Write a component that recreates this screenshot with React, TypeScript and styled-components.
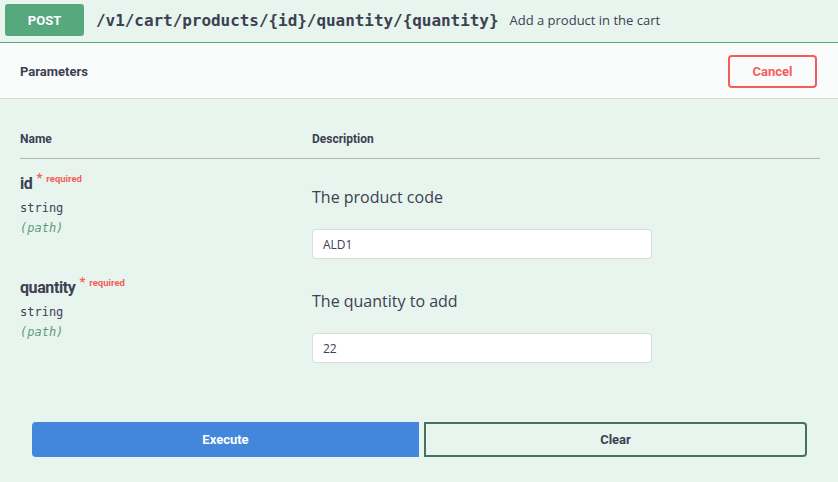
import React from "react";
import styled, { createGlobalStyle } from "styled-components";

const Global = createGlobalStyle`
  html, body { margin: 0; padding: 0; background: #e8f4ee; }
  * { box-sizing: border-box; }
`;

const TITLE = `"Roboto", "Open Sans", sans-serif`;
const MONO = `"DejaVu Sans Mono", "Liberation Mono", monospace`;
const TEXT = `"Open Sans", "Roboto", sans-serif`;

const Page = styled.div`
  width: 838px;
  height: 482px;
  background: #e8f4ee;
  color: #3b4151;
  overflow: hidden;
`;

const Summary = styled.div`
  display: flex;
  align-items: center;
  height: 43px;
  padding: 4px 5px 6px;
  border-bottom: 1px solid #55a97d;
`;

const Method = styled.span`
  display: flex;
  align-items: center;
  justify-content: center;
  width: 79px;
  height: 32px;
  border-radius: 3px;
  background: #55a97d;
  color: #fff;
  font-family: ${TITLE};
  font-weight: 700;
  font-size: 13px;
  text-shadow: 0 1px 0 rgba(0, 0, 0, 0.1);
`;

const PathText = styled.span`
  margin-left: 12px;
  font-family: ${MONO};
  font-weight: 700;
  font-size: 16px;
  letter-spacing: -0.05px;
  color: #3b4151;
`;

const SummaryDesc = styled.span`
  margin-left: 11px;
  font-family: ${TEXT};
  font-size: 13px;
  color: #3b4151;
`;

const SectionHeader = styled.div`
  display: flex;
  align-items: center;
  justify-content: space-between;
  height: 56px;
  padding: 1px 21px 0 20px;
  background: #fafcfb;
  border-bottom: 1px solid #d8ddda;
`;

const SectionTitle = styled.h4`
  margin: 0;
  padding-top: 1px;
  font-family: ${TITLE};
  font-weight: 700;
  font-size: 13px;
  color: #3b4151;
`;

const CancelButton = styled.button`
  width: 89px;
  height: 33px;
  border: 2px solid #f45c5c;
  border-radius: 4px;
  background: transparent;
  color: #f45c5c;
  font-family: ${TITLE};
  font-weight: 700;
  font-size: 13px;
`;

const Table = styled.div`
  padding: 0 18px 0 20px;
`;

const HeadRow = styled.div`
  display: grid;
  grid-template-columns: 292px 1fr;
  padding: 32px 0 11px;
  border-bottom: 1px solid #b3b6a9;
`;

const HeadCell = styled.div`
  font-family: ${TITLE};
  font-weight: 700;
  font-size: 12px;
  line-height: 16px;
  color: #3b4151;
`;

const Row = styled.div`
  display: grid;
  grid-template-columns: 292px 1fr;
  padding: 15px 0 4px;
`;

const NameCell = styled.div`
  display: flex;
  flex-direction: column;
`;

const ParamName = styled.div`
  font-family: ${TITLE};
  font-weight: 700;
  font-size: 16px;
  line-height: 20px;
  color: #3b4151;
  letter-spacing: -0.4px;
`;

const Required = styled.span`
  position: relative;
  top: -7px;
  margin-left: 4px;
  font-family: ${TITLE};
  font-weight: 700;
  font-size: 9.5px;
  letter-spacing: 0;
  color: #f45c5c;

  &::before {
    content: "*";
    font-size: 13px;
    font-weight: 700;
    margin-right: 4px;
  }
`;

const ParamType = styled.div`
  margin-top: 2px;
  font-family: ${MONO};
  font-size: 12px;
  line-height: 20px;
  color: #3b4151;
`;

const ParamIn = styled.div`
  font-family: ${MONO};
  font-style: italic;
  font-size: 12px;
  line-height: 20px;
  color: #5f9b7e;
`;

const DescCell = styled.div`
  display: flex;
  flex-direction: column;
  padding-top: 11px;
`;

const DescText = styled.div`
  font-family: ${TEXT};
  font-size: 16px;
  line-height: 24px;
  color: #3b4151;
`;

const Input = styled.input`
  margin-top: 20px;
  width: 340px;
  height: 30px;
  padding: 0 10px;
  border: 1px solid #d9dedb;
  border-radius: 4px;
  background: #fff;
  font-family: ${TEXT};
  font-size: 12px;
  color: #3b4151;
  outline: none;
`;

const Actions = styled.div`
  display: flex;
  gap: 5px;
  padding: 55px 31px 0 32px;
`;

const ExecuteButton = styled.button`
  width: 387px;
  height: 35px;
  border: none;
  border-radius: 4px 0 0 4px;
  background: #4287dc;
  color: #fff;
  font-family: ${TITLE};
  font-weight: 700;
  font-size: 13px;
`;

const ClearButton = styled.button`
  flex: 1;
  height: 35px;
  border: 2px solid #44725f;
  border-radius: 0 4px 4px 0;
  background: transparent;
  color: #3b4151;
  font-family: ${TITLE};
  font-weight: 700;
  font-size: 13px;
`;

const params = [
  { name: "id", type: "string", loc: "(path)", desc: "The product code", value: "ALD1" },
  { name: "quantity", type: "string", loc: "(path)", desc: "The quantity to add", value: "22" },
];

export default function App() {
  return (
    <Page>
      <Global />
      <Summary>
        <Method>POST</Method>
        <PathText>/v1/cart/products/&#123;id&#125;/quantity/&#123;quantity&#125;</PathText>
        <SummaryDesc>Add a product in the cart</SummaryDesc>
      </Summary>
      <SectionHeader>
        <SectionTitle>Parameters</SectionTitle>
        <CancelButton>Cancel</CancelButton>
      </SectionHeader>
      <Table>
        <HeadRow>
          <HeadCell>Name</HeadCell>
          <HeadCell>Description</HeadCell>
        </HeadRow>
        {params.map((p) => (
          <Row key={p.name}>
            <NameCell>
              <ParamName>
                {p.name}
                <Required>required</Required>
              </ParamName>
              <ParamType>{p.type}</ParamType>
              <ParamIn>{p.loc}</ParamIn>
            </NameCell>
            <DescCell>
              <DescText>{p.desc}</DescText>
              <Input defaultValue={p.value} />
            </DescCell>
          </Row>
        ))}
      </Table>
      <Actions>
        <ExecuteButton>Execute</ExecuteButton>
        <ClearButton>Clear</ClearButton>
      </Actions>
    </Page>
  );
}
